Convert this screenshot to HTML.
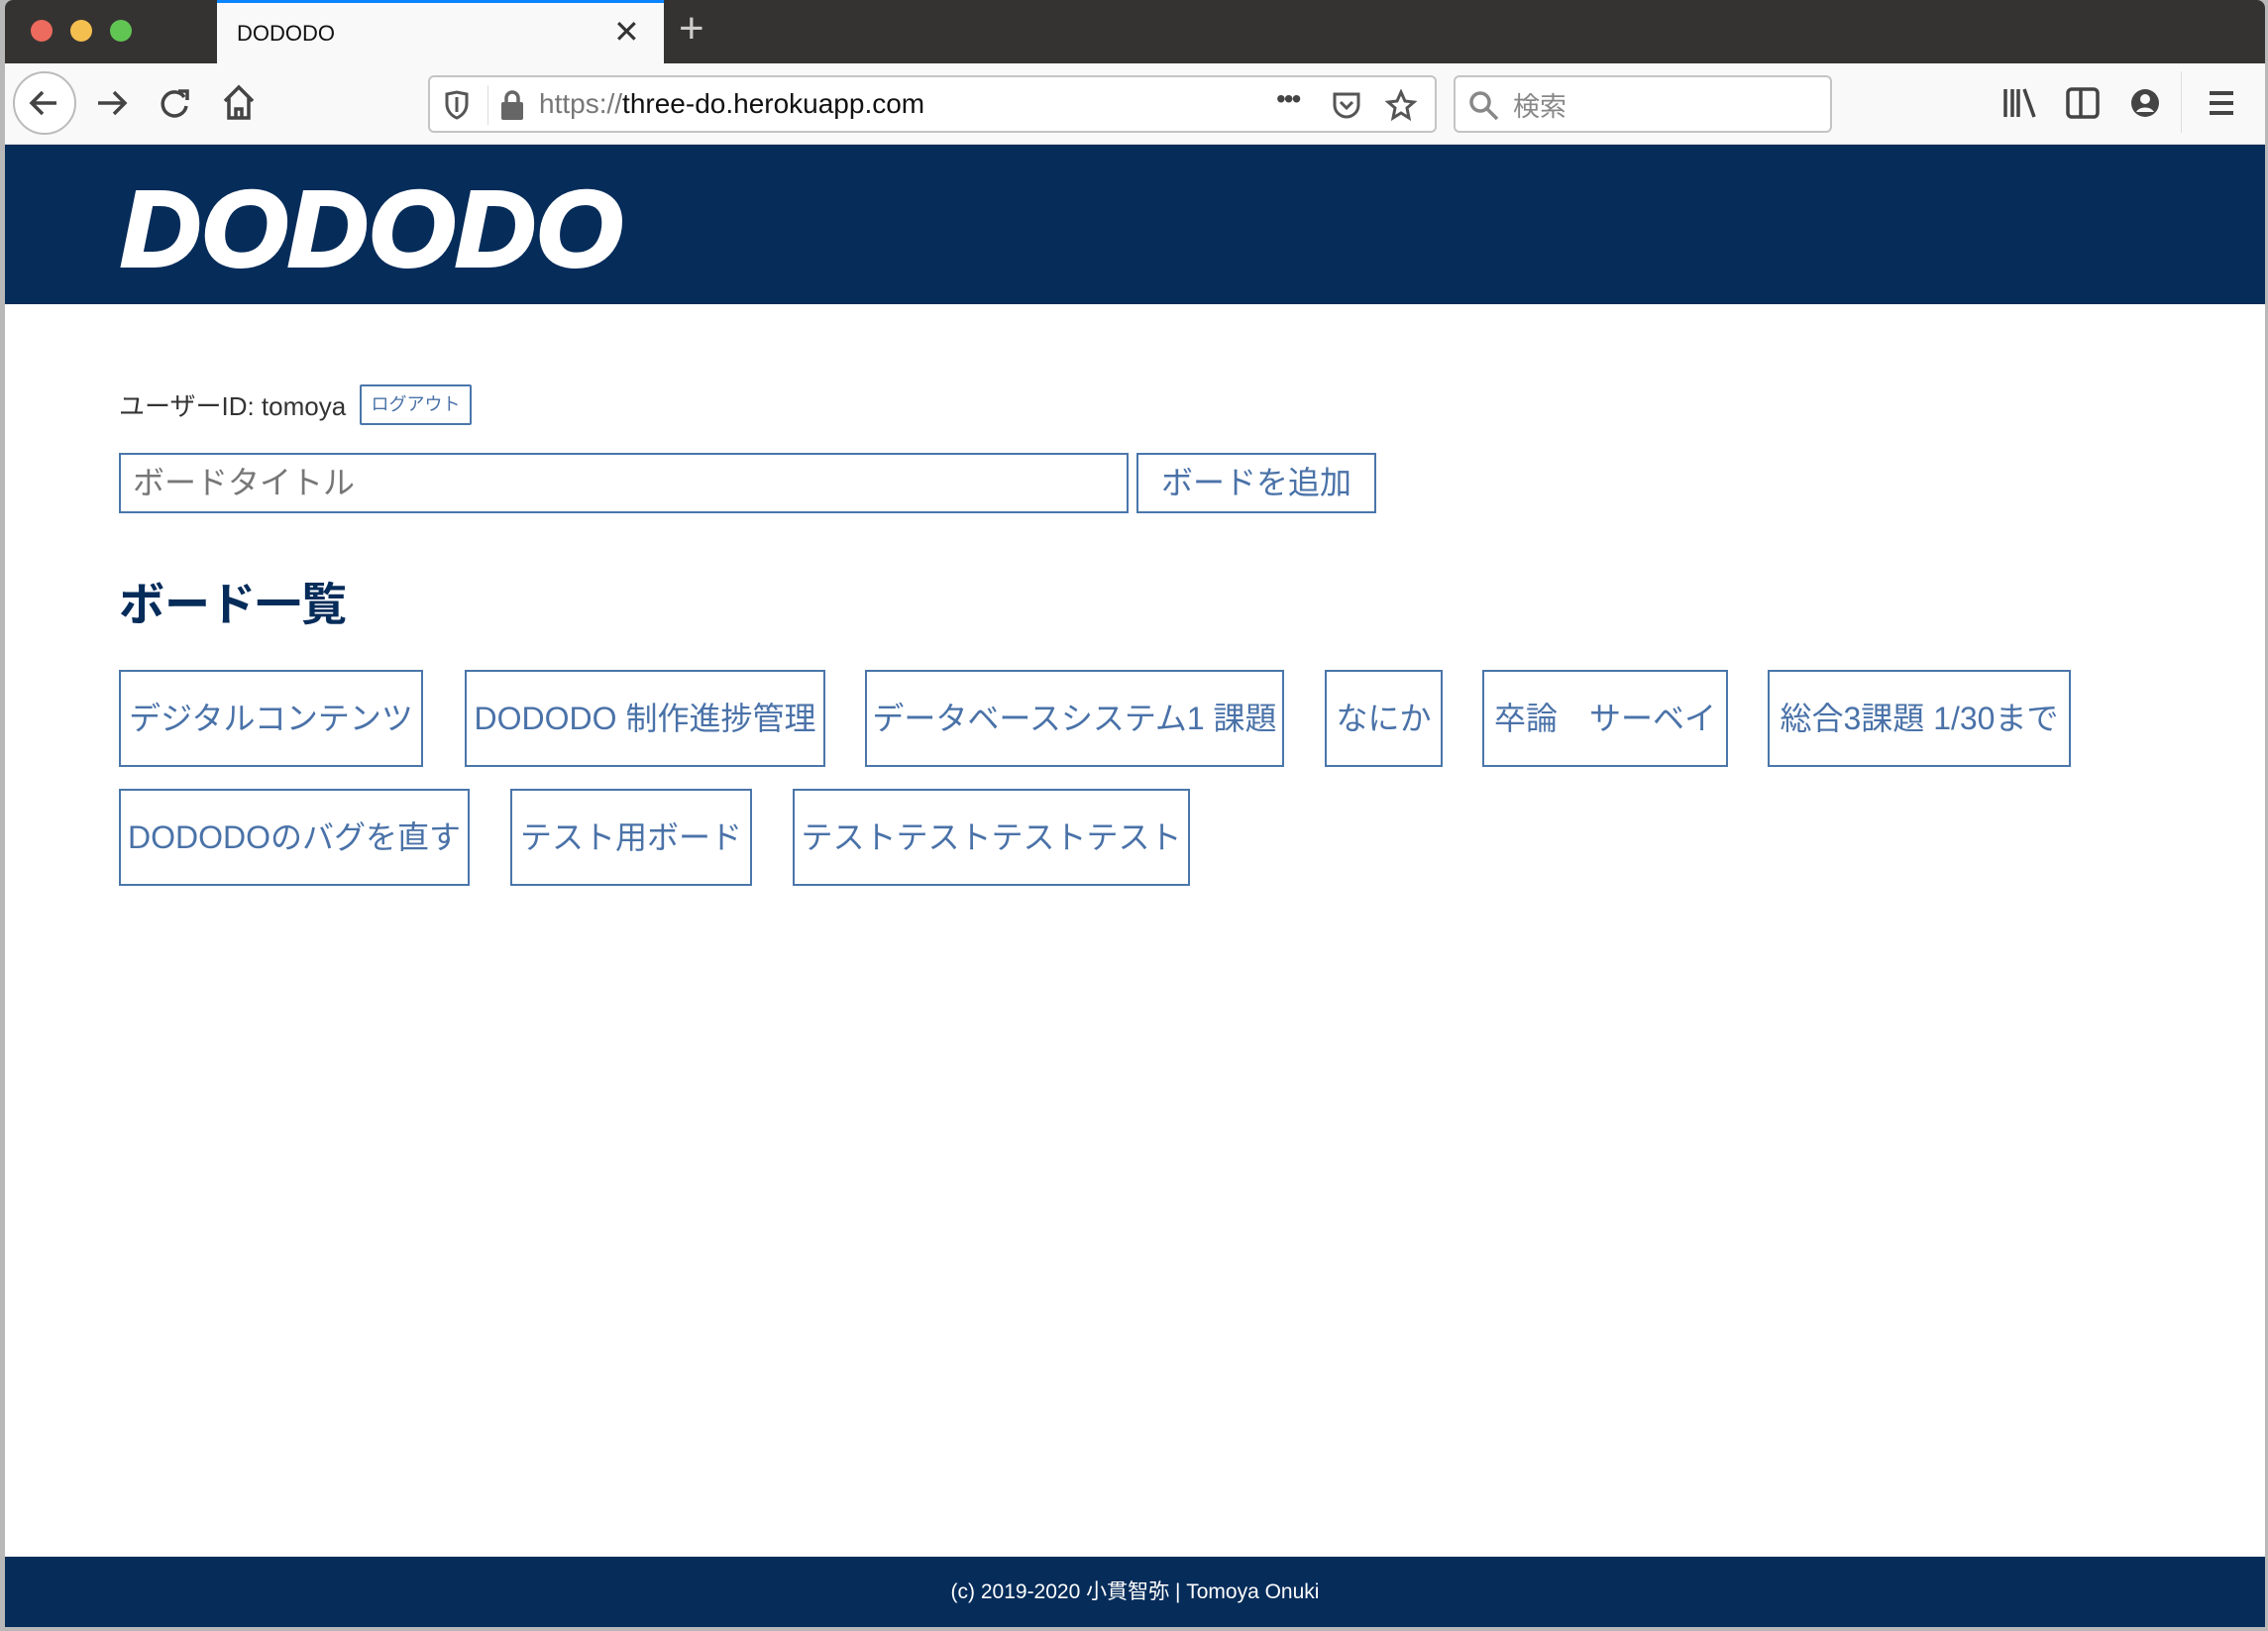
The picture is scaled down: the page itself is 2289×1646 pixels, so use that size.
<!DOCTYPE html>
<html><head><meta charset="utf-8"><style>
*{box-sizing:border-box;margin:0;padding:0}
body{width:2289px;height:1646px;background:#b8b8b8;font-family:"Liberation Sans","Noto Sans CJK JP",sans-serif;position:relative;overflow:hidden}
.win{position:absolute;left:5px;top:0;width:2281px;height:1642px;background:#fff;border-radius:8px 8px 0 0;overflow:hidden}
.tabbar{position:absolute;left:0;top:0;width:100%;height:64px;background:#353331}
.dot{position:absolute;top:20px;width:22px;height:22px;border-radius:50%}
.tab{position:absolute;left:214px;top:0;width:451px;height:64px;background:#f9f9fa;border-top:3px solid #0a84ff}
.tab span{position:absolute;left:20px;top:18px;font-size:22px;color:#111}
.toolbar{position:absolute;left:0;top:64px;width:100%;height:82px;background:#f9f9fa;border-bottom:1px solid #ddd}
.url{position:absolute;left:427px;top:12px;width:1018px;height:58px;background:#fff;border:2px solid #c4c4c4;border-radius:6px}
.search{position:absolute;left:1462px;top:12px;width:382px;height:58px;background:#fff;border:2px solid #c4c4c4;border-radius:6px}
.ic{position:absolute;color:#444}
.header{position:absolute;left:0;top:146px;width:100%;height:161px;background:#062c5a}
.logo{position:absolute;left:117px;top:22px;font-size:108px;font-weight:900;font-style:italic;color:#fff;letter-spacing:1px;-webkit-text-stroke:4px #fff;transform:scaleX(1.03);transform-origin:left;font-family:"Liberation Sans",sans-serif}
.user{position:absolute;left:115px;top:390px;font-size:26px;color:#333}
.logout{position:absolute;left:358px;top:388px;width:113px;height:41px;border:2px solid #4a76aa;border-radius:2px;color:#4a72a8;font-size:18px;text-align:center;line-height:37px}
.inp{position:absolute;left:115px;top:457px;width:1019px;height:61px;border:2px solid #4a76aa;font-size:32px;color:#777;padding-left:12px;line-height:57px}
.addb{position:absolute;left:1142px;top:457px;width:242px;height:61px;border:2px solid #4a76aa;font-size:32px;color:#4a72a8;text-align:center;line-height:57px}
h2{position:absolute;left:115px;top:574px;font-size:46px;font-weight:bold;color:#062c5a}
.b{position:absolute;height:98px;border:2px solid #4a76aa;color:#4a72a8;font-size:32px;line-height:94px;text-align:center;white-space:nowrap;overflow:hidden}
.footer{position:absolute;left:0;top:1571px;width:100%;height:71px;background:#062c5a;color:#fff;font-size:21px;text-align:center;line-height:71px}
</style></head><body>
<div class="win">
<div class="tabbar">
<div class="dot" style="left:26px;background:#ed6a5e"></div>
<div class="dot" style="left:66px;background:#f5bf4f"></div>
<div class="dot" style="left:106px;background:#61c554"></div>
<div class="tab"><span>DODODO</span><span style="left:400px;top:10px;font-size:32px;color:#333">✕</span></div>
<div style="position:absolute;left:680px;top:4px;font-size:44px;color:#ccc">+</div>
</div>
<div class="toolbar">
<div style="position:absolute;left:8px;top:8px;width:64px;height:64px;border:2px solid #bbb;border-radius:50%;background:#fff"></div>
<svg class="ic" style="left:18px;top:20px" width="44" height="40" viewBox="0 0 44 40"><path d="M34 20H10M20 9L9 20l11 11" stroke="#444" stroke-width="3.5" fill="none"/></svg>
<svg class="ic" style="left:88px;top:20px" width="40" height="40" viewBox="0 0 40 40"><path d="M6 20h26M22 9l11 11-11 11" stroke="#444" stroke-width="3.5" fill="none"/></svg>
<svg class="ic" style="left:152px;top:20px" width="40" height="40" viewBox="0 0 40 40"><path d="M29 14a12 12 0 1 0 2 9" stroke="#444" stroke-width="3.5" fill="none"/><path d="M23 8h9v9" stroke="#444" stroke-width="3.5" fill="none"/></svg>
<svg class="ic" style="left:216px;top:18px" width="40" height="44" viewBox="0 0 40 44"><path d="M6 20L20 6l14 14M10 17v20h20V17M17 37v-9h6v9" stroke="#444" stroke-width="3.5" fill="none"/></svg>
<div class="url">
<svg class="ic" style="left:14px;top:13px" width="26" height="30" viewBox="0 0 26 30"><path d="M3 4l10-2 10 2v10c0 7-5 12-10 14C8 26 3 21 3 14z" stroke="#555" stroke-width="3" fill="none"/><path d="M13 7v15" stroke="#555" stroke-width="3"/></svg>
<div style="position:absolute;left:58px;top:8px;width:1px;height:40px;background:#ddd"></div>
<svg class="ic" style="left:70px;top:12px" width="26" height="32" viewBox="0 0 26 32"><rect x="2" y="13" width="22" height="18" rx="2" fill="#666"/><path d="M7 14V9a6 6 0 0 1 12 0v5" stroke="#666" stroke-width="3.5" fill="none"/></svg>
<div style="position:absolute;left:110px;top:11px;font-size:28px;color:#777">https://<span style="color:#111">three-do.herokuapp.com</span></div>
<div style="position:absolute;left:854px;top:6px;font-size:28px;color:#444;letter-spacing:-2px">•••</div>
<svg class="ic" style="left:910px;top:14px" width="30" height="30" viewBox="0 0 30 30"><path d="M3 3h24v11a12 12 0 0 1-24 0z" stroke="#555" stroke-width="3" fill="none"/><path d="M9 11l6 6 6-6" stroke="#555" stroke-width="3" fill="none"/></svg>
<svg class="ic" style="left:964px;top:12px" width="32" height="32" viewBox="0 0 32 32"><path d="M16 3l4 9 9 1-7 6 2 10-8-5-8 5 2-10-7-6 9-1z" stroke="#555" stroke-width="3" fill="none"/></svg>
</div>
<div class="search">
<svg class="ic" style="left:12px;top:12px" width="34" height="34" viewBox="0 0 34 34"><circle cx="13" cy="13" r="9" stroke="#888" stroke-width="3.5" fill="none"/><path d="M20 20l10 10" stroke="#888" stroke-width="3.5"/></svg>
<div style="position:absolute;left:58px;top:8px;font-size:27px;color:#888">検索</div>
</div>
<svg class="ic" style="left:2016px;top:24px" width="36" height="32" viewBox="0 0 36 32"><path d="M3 2v28M10 2v28M16 2v28M22 2l10 28" stroke="#444" stroke-width="3.5"/></svg>
<svg class="ic" style="left:2080px;top:24px" width="34" height="32" viewBox="0 0 34 32"><rect x="2" y="2" width="30" height="28" rx="4" stroke="#444" stroke-width="3.5" fill="none"/><path d="M15 2v28" stroke="#444" stroke-width="3.5"/></svg>
<svg class="ic" style="left:2144px;top:24px" width="32" height="32" viewBox="0 0 32 32"><circle cx="16" cy="16" r="14" fill="#444"/><circle cx="16" cy="12" r="5" fill="#f9f9fa"/><path d="M7 25a10 8 0 0 1 18 0" fill="#f9f9fa"/></svg>
<div style="position:absolute;left:2196px;top:8px;width:1px;height:62px;background:#ddd"></div>
<svg class="ic" style="left:2222px;top:26px" width="30" height="28" viewBox="0 0 30 28"><path d="M3 4h24M3 14h24M3 24h24" stroke="#444" stroke-width="4"/></svg>
</div>
<div class="header"><div class="logo">DODODO</div></div>
<div class="user">ユーザーID: tomoya</div>
<div class="logout">ログアウト</div>
<div class="inp">ボードタイトル</div>
<div class="addb">ボードを追加</div>
<h2>ボード一覧</h2>
<div class="b" style="left:115px;top:676px;width:307px">デジタルコンテンツ</div>
<div class="b" style="left:464px;top:676px;width:364px">DODODO 制作進捗管理</div>
<div class="b" style="left:868px;top:676px;width:423px">データベースシステム1 課題</div>
<div class="b" style="left:1332px;top:676px;width:119px">なにか</div>
<div class="b" style="left:1491px;top:676px;width:248px">卒論　サーベイ</div>
<div class="b" style="left:1779px;top:676px;width:306px">総合3課題 1/30まで</div>
<div class="b" style="left:115px;top:796px;width:354px">DODODOのバグを直す</div>
<div class="b" style="left:510px;top:796px;width:244px">テスト用ボード</div>
<div class="b" style="left:795px;top:796px;width:401px">テストテストテストテスト</div>
<div class="footer">(c) 2019-2020 小貫智弥 | Tomoya Onuki</div>
</div>
</body></html>
